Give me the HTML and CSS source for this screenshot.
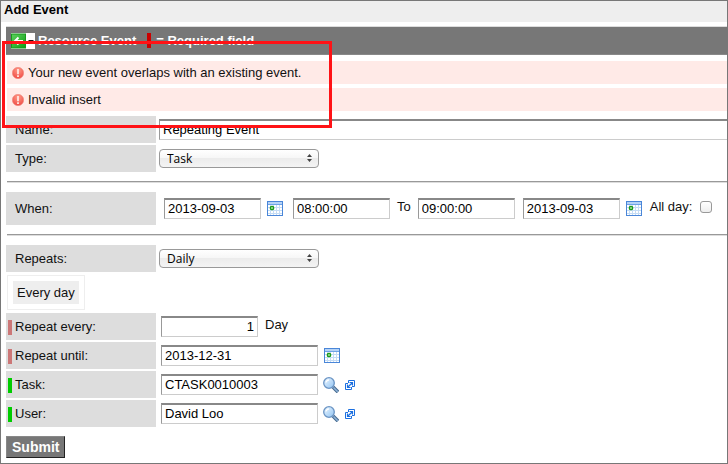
FILE: index.html
```html
<!DOCTYPE html>
<html lang="en">
<head>
<meta charset="utf-8">
<title>Add Event</title>
<link rel="stylesheet" href="styles.css">
</head>
<body>
<svg class="defs" aria-hidden="true">
  <defs>
    <linearGradient id="lens" x1="0" y1="0" x2="1" y2="1">
      <stop offset="0" stop-color="#eef7ff"/><stop offset="1" stop-color="#8fc3f3"/>
    </linearGradient>
    <linearGradient id="go" x1="0" y1="0" x2="1" y2="1">
      <stop offset="0" stop-color="#5fd35f"/><stop offset="1" stop-color="#0b9d13"/>
    </linearGradient>
    <radialGradient id="alert" cx="50%" cy="25%" r="75%">
      <stop offset="0" stop-color="#ff9a88"/><stop offset="1" stop-color="#f04a44"/>
    </radialGradient>
    <symbol id="calendar" viewBox="0 0 16 15">
      <rect x="0.5" y="0.5" width="15" height="14" fill="#fff" stroke="#4a86d8"/>
      <rect x="1" y="1" width="14" height="2" fill="#b5d3f7"/>
      <path d="M1 3.5H15" stroke="#6fa3e6"/>
      <path d="M1 6.5H15M1 9.5H15M1 12.5H15M3.500 4V14M6.500 4V14M9.500 4V14M12.500 4V14" stroke="#c4dcf5"/>
      <rect x="3.500" y="5.500" width="3" height="3" rx="1" fill="#d9ffd0" stroke="#1c9a1c" stroke-width="1.500"/>
    </symbol>
    <symbol id="search" viewBox="0 0 16 16">
      <path d="M10 10L15 15" stroke="#44688f" stroke-width="3.600"/>
      <path d="M10.500 10.500L14.700 14.700" stroke="#8fb4d9" stroke-width="1.600"/>
      <circle cx="6" cy="6" r="5.300" fill="url(#lens)" stroke="#6a94c4" stroke-width="1.300"/>
      <path d="M3 5.500Q3.500 3 6 2.800" fill="none" stroke="#fff" stroke-width="1.200"/>
    </symbol>
    <symbol id="popup" viewBox="0 0 10 10">
      <path d="M3.500 3V0.500H9.500V6.500H7" fill="none" stroke="#1b6fe0"/>
      <path d="M3 3.500H0.500V9.500H6.500V7" fill="none" stroke="#1b6fe0"/>
      <path d="M2.500 7.500L7.500 2.500M4.500 2.500H7.500V5.500M2.500 4.500V7.500H5.500" fill="none" stroke="#1b6fe0" stroke-width="1.200"/>
    </symbol>
    <symbol id="error" viewBox="0 0 12 12">
      <circle cx="6" cy="6" r="5.700" fill="url(#alert)" stroke="#ef8a80" stroke-width="0.600"/>
      <path d="M6 2V7.200M6 8.300V10" stroke="#ffdcd6" stroke-width="2"/>
    </symbol>
    <symbol id="updown" viewBox="0 0 5 8">
      <path d="M0 3L2.500 0L5 3ZM0 5L2.500 8L5 5Z" fill="#444"/>
    </symbol>
  </defs>
</svg>
<main class="page">
  <h1 class="title">Add Event</h1>
  <form class="form">
    <header class="bar">
      <button class="back" type="button" aria-label="Back">
        <svg width="24" height="16" viewBox="0 0 24 16">
          <rect width="24" height="16" fill="#fff"/>
          <rect x="0.500" y="1" width="14" height="14" fill="url(#go)" stroke="#159a1b"/>
          <path d="M12 8H4M7.500 4.500L4 8L7.500 11.500" fill="none" stroke="#fff" stroke-width="2"/>
          <path d="M17 7H23L20 10Z" fill="#111"/>
        </svg>
      </button>
      <span class="bar-title">Resource Event</span>
      <span class="required"></span>
      <span>= Required field</span>
    </header>
    <div class="alerts">
      <p class="alert"><svg width="12" height="12"><use href="#error"/></svg>Your new event overlaps with an existing event.</p>
      <p class="alert"><svg width="12" height="12"><use href="#error"/></svg>Invalid insert</p>
      <div class="highlight"></div>
    </div>
    <div class="row">
      <label class="label" for="name">Name:</label>
      <input class="text grow" id="name" value="Repeating Event">
    </div>
    <div class="row">
      <label class="label" for="type">Type:</label>
      <span class="pick"><select id="type"><option>Task</option></select><svg width="5" height="8"><use href="#updown"/></svg></span>
    </div>
    <hr>
    <div class="row when">
      <label class="label" for="from-date">When:</label>
      <div class="range">
        <div class="date">
          <input class="text short" id="from-date" value="2013-09-03">
          <button class="icon" type="button" aria-label="Start date"><svg width="16" height="15"><use href="#calendar"/></svg></button>
        </div>
        <div class="times">
          <input class="text short" id="from-time" aria-label="Start time" value="08:00:00">
          <label class="raised" for="to-time">To</label>
          <input class="text short" id="to-time" value="09:00:00">
        </div>
        <div class="date">
          <input class="text short" id="to-date" aria-label="End date" value="2013-09-03">
          <button class="icon" type="button" aria-label="End date"><svg width="16" height="15"><use href="#calendar"/></svg></button>
        </div>
        <div class="allday">
          <label for="all-day">All day:</label>
          <input class="check" type="checkbox" id="all-day">
        </div>
      </div>
    </div>
    <hr>
    <div class="row">
      <label class="label" for="repeats">Repeats:</label>
      <span class="pick"><select id="repeats"><option>Daily</option></select><svg width="5" height="8"><use href="#updown"/></svg></span>
    </div>
    <div class="summary"><span>Every day</span></div>
    <div class="row inset">
      <label class="label marked" for="every">Repeat every:</label>
      <input class="text short number" id="every" value="1">
      <span class="raised">Day</span>
    </div>
    <div class="row inset">
      <label class="label marked" for="until">Repeat until:</label>
      <input class="text medium" id="until" value="2013-12-31">
      <button class="icon" type="button" aria-label="Pick date"><svg width="16" height="15"><use href="#calendar"/></svg></button>
    </div>
    <div class="row inset">
      <label class="label marked filled" for="task">Task:</label>
      <input class="text medium" id="task" value="CTASK0010003">
      <span class="tools">
        <button class="icon" type="button" aria-label="Look up task"><svg width="16" height="16"><use href="#search"/></svg></button>
        <button class="icon" type="button" aria-label="Open task"><svg width="10" height="10"><use href="#popup"/></svg></button>
      </span>
    </div>
    <div class="row inset">
      <label class="label marked filled" for="user">User:</label>
      <input class="text medium" id="user" value="David Loo">
      <span class="tools">
        <button class="icon" type="button" aria-label="Look up user"><svg width="16" height="16"><use href="#search"/></svg></button>
        <button class="icon" type="button" aria-label="Open user"><svg width="10" height="10"><use href="#popup"/></svg></button>
      </span>
    </div>
    <button class="submit" type="submit">Submit</button>
  </form>
</main>
</body>
</html>
```
FILE: styles.css
```css
* { box-sizing: border-box; }

body {
  margin: 0;
  background: #fff;
  color: #111;
  font: 13px/16px "Liberation Sans", Arial, sans-serif;
}

.defs { position: absolute; width: 0; height: 0; }
svg { display: block; flex: none; }

.page {
  min-height: 100vh;
  border: 1px solid #777;
}

.title {
  margin: 0;
  padding: 0 3px 4px;
  background: #eee;
  color: #000;
  font-size: 13px;
  line-height: 17px;
}

.form { padding: 4px 0 4px 5px; }

.bar {
  display: flex;
  align-items: center;
  height: 29px;
  padding-left: 5px;
  border-top: 1px solid #ddd;
  border-bottom: 1px solid #888;
  background: #777;
  color: #fff;
  font-weight: bold;
}

.back, .icon {
  display: block;
  flex: none;
  padding: 0;
  border: 0;
  background: none;
}

.bar-title { margin: 0 11px 0 3px; }

.required {
  width: 4px;
  height: 15px;
  margin-right: 5px;
  background: #c00;
}

.alerts {
  position: relative;
  padding: 6px 0 5px 1px;
}

.alert {
  display: flex;
  align-items: center;
  gap: 4px;
  height: 23px;
  margin: 0;
  padding-left: 5px;
  background: #ffeae7;
}

.alert + .alert { margin-top: 4px; }

.highlight {
  position: absolute;
  top: -14px;
  left: -4px;
  width: 330px;
  height: 87px;
  border: 3px solid #ff1216;
  pointer-events: none;
}

.row {
  display: flex;
  align-items: center;
  gap: 3px;
  margin-bottom: 2px;
}

.label {
  flex: none;
  width: 150px;
  padding: 6px 0 5px 9px;
  background: #ddd;
}

.when { margin: 0; gap: 8px; }
.when .label { padding: 9px 0 8px 9px; }

.inset { gap: 5px; }

.marked {
  display: flex;
  align-items: center;
  gap: 3px;
  padding-left: 2px;
}

.marked::before {
  width: 4px;
  height: 15px;
  background: #c77;
  content: "";
}

.filled::before { background: #0c0; }

.text {
  height: 21px;
  padding: 0 3px 1px;
  border: 1px solid #ccc;
  border-top: 2px solid #888;
  border-left-color: #999;
  border-radius: 0;
  background: #fff;
  color: #000;
  font: inherit;
}

.grow { flex: 1; min-width: 0; border-right: 0; }
.short { width: 97px; }
.medium { width: 157px; }
.number { text-align: right; }

.raised { padding: 0 2px 4px; }

.pick { position: relative; display: block; }

.pick select {
  display: block;
  width: 160px;
  height: 19px;
  padding: 0 7px;
  border: 1px solid #999;
  border-radius: 4px;
  appearance: none;
  background: linear-gradient(#fff, #f6f6f6 50%, #ececec 50%, #f4f4f4);
  color: #000;
  font: 12px/16px "Open Sans", sans-serif;
}

.pick svg {
  position: absolute;
  top: 5px;
  right: 7px;
  pointer-events: none;
}

hr {
  height: 2px;
  margin: 9px 0 9px 1px;
  border: 0;
  border-top: 1px solid #999;
  background: #ddd;
}

.range { display: flex; gap: 8px; }
.date { display: flex; align-items: center; gap: 6px; }
.date + .times { margin-left: 2px; }
.times { display: flex; align-items: center; gap: 5px; }
.allday { display: flex; align-items: center; gap: 8px; padding-bottom: 4px; }

.check {
  width: 12px;
  height: 12px;
  margin: 0;
  border: 1px solid #999;
  border-radius: 3px;
  appearance: none;
  background: linear-gradient(#fff, #eee);
}

.summary {
  width: fit-content;
  margin: 3px 0 3px 1px;
  padding: 5px;
  border: 1px solid #eee;
}

.summary span {
  display: block;
  padding: 4px 4px 3px;
  background: #eee;
}

.inset > .icon { margin-left: 1px; }

.tools { display: flex; align-items: center; gap: 6px; }

.submit {
  display: block;
  height: 22px;
  margin-top: 9px;
  padding: 0 5px;
  border: 1px solid #888;
  border-right: 1px solid #222;
  border-bottom: 1px solid #222;
  background: #777;
  color: #fff;
  font: bold 14px/18px "Liberation Sans", Arial, sans-serif;
}
```
